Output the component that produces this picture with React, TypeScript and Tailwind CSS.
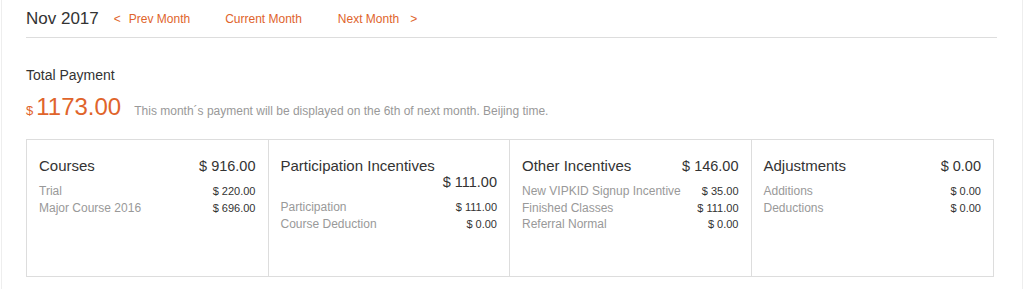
type Item = { label: string; amount: string };
type Card = { title: string; total: string; items: Item[] };

const cards: Card[] = [
  {
    title: "Courses",
    total: "$ 916.00",
    items: [
      { label: "Trial", amount: "$ 220.00" },
      { label: "Major Course 2016", amount: "$ 696.00" },
    ],
  },
  {
    title: "Participation Incentives",
    total: "$ 111.00",
    items: [
      { label: "Participation", amount: "$ 111.00" },
      { label: "Course Deduction", amount: "$ 0.00" },
    ],
  },
  {
    title: "Other Incentives",
    total: "$ 146.00",
    items: [
      { label: "New VIPKID Signup Incentive", amount: "$ 35.00" },
      { label: "Finished Classes", amount: "$ 111.00" },
      { label: "Referral Normal", amount: "$ 0.00" },
    ],
  },
  {
    title: "Adjustments",
    total: "$ 0.00",
    items: [
      { label: "Additions", amount: "$ 0.00" },
      { label: "Deductions", amount: "$ 0.00" },
    ],
  },
];

function PayCard({ card }: { card: Card }) {
  return (
    <div className="pt-[18px] pl-[12px] pr-[12px]">
      <div className="flex flex-wrap items-baseline gap-x-4 leading-[16px] text-[#333]">
        <span className="text-[15px]">{card.title}</span>
        <span className="ml-auto text-[14.5px]">{card.total}</span>
      </div>
      <div className="mt-[9px] leading-[16.5px]">
        {card.items.map((it) => (
          <div key={it.label} className="flex items-baseline justify-between">
            <span className="text-[12px] text-[#999]">{it.label}</span>
            <span className="text-[11px] text-[#333]">{it.amount}</span>
          </div>
        ))}
      </div>
    </div>
  );
}

export default function App() {
  return (
    <div
      className="h-[289px] w-[1024px] bg-white px-px"
      style={{ fontFamily: '"Liberation Sans", Arial, sans-serif' }}
    >
      <div className="h-full border-x border-[#eee] pl-[24px] pr-[25px]">
        <header className="flex h-[38px] items-center border-b border-[#ddd] text-[#e0642b]">
          <h1 className="text-[17px] text-[#333]">Nov 2017</h1>
          <a className="ml-[15px] text-[12px]">
            &lt;<span className="ml-[8px]">Prev Month</span>
          </a>
          <a className="ml-[35px] text-[12px]">Current Month</a>
          <a className="ml-[36px] text-[12px]">
            Next Month<span className="ml-[11px]">&gt;</span>
          </a>
        </header>

        <section className="mt-[27px]">
          <div className="text-[14px] leading-5 text-[#333]">Total Payment</div>
          <div className="mt-[8px] flex items-baseline text-[#e0642b]">
            <span className="text-[13px]">$</span>
            <span className="ml-[3px] text-[24px] leading-[28px]">1173.00</span>
            <span className="ml-[13px] text-[12px] text-[#999]">
              This month´s payment will be displayed on the 6th of next month. Beijing time.
            </span>
          </div>
        </section>

        <div className="mt-[18px] mr-[3px] grid h-[138px] grid-cols-4 divide-x divide-[#ddd] border border-[#ddd]">
          {cards.map((c) => (
            <PayCard key={c.title} card={c} />
          ))}
        </div>
      </div>
    </div>
  );
}
